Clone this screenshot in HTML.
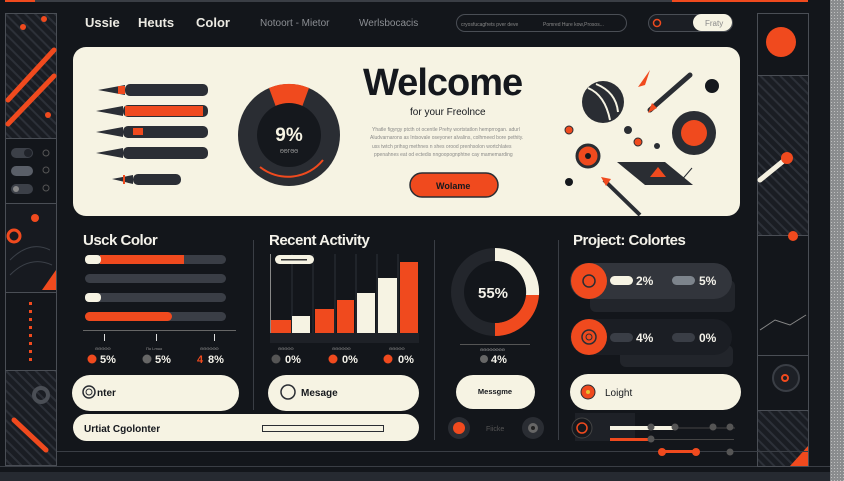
<!DOCTYPE html>
<html><head><meta charset="utf-8"><style>
html,body{margin:0;padding:0;background:#13161b;}
svg{display:block}
text{font-family:"Liberation Sans","DejaVu Sans",sans-serif}
</style></head><body>
<svg width="844" height="481" viewBox="0 0 844 481" xmlns="http://www.w3.org/2000/svg">
<defs>
<pattern id="st" width="7" height="7" patternUnits="userSpaceOnUse" patternTransform="rotate(-45)"><rect width="7" height="7" fill="#1a1d23"/><rect width="2" height="7" fill="#2c3038"/></pattern>
<pattern id="gr" width="3" height="3" patternUnits="userSpaceOnUse"><rect width="3" height="3" fill="#8a8c8e"/><rect width="1" height="1" fill="#bfc0c0"/></pattern>
</defs>
<rect width="844" height="481" fill="#13161b"/>
<rect x="830" y="0" width="14" height="481" fill="url(#gr)"/>
<rect x="0" y="472" width="830" height="9" fill="#262a31"/>
<rect x="5" y="0" width="30" height="2" fill="#f04a1e"/>
<rect x="35" y="0" width="637" height="2" fill="#3a3e45"/>
<rect x="672" y="0" width="136" height="2" fill="#f04a1e"/>
<!-- left column -->
<g stroke="#4a4e55" stroke-width="1" fill="none">
<rect x="5.5" y="13.5" width="51" height="125" fill="url(#st)"/>
<rect x="5.5" y="138.5" width="51" height="65"/>
<rect x="5.5" y="203.5" width="51" height="89" fill="#171a20"/>
<rect x="5.5" y="292.5" width="51" height="78"/>
<rect x="5.5" y="370.5" width="51" height="95" fill="url(#st)"/>
</g>
<g stroke="#f04a1e" stroke-width="5" stroke-linecap="round">
<line x1="8" y1="100" x2="54" y2="50"/><line x1="8" y1="124" x2="54" y2="76"/>
<line x1="14" y1="420" x2="46" y2="450"/>
</g>
<circle cx="23" cy="27" r="3" fill="#f04a1e"/><circle cx="44" cy="19" r="3" fill="#f04a1e"/><circle cx="48" cy="115" r="3" fill="#f04a1e"/>
<rect x="11" y="148" width="22" height="10" rx="5" fill="#3c4048"/><circle cx="28" cy="153" r="4" fill="#20232a"/>
<rect x="11" y="166" width="22" height="10" rx="5" fill="#5a5f68"/>
<rect x="11" y="184" width="22" height="10" rx="5" fill="#3c4048"/><circle cx="16" cy="189" r="3" fill="#888"/>
<circle cx="46" cy="153" r="3" fill="none" stroke="#555"/><circle cx="46" cy="170" r="3" fill="none" stroke="#555"/><circle cx="46" cy="188" r="3" fill="none" stroke="#555"/>
<circle cx="35" cy="218" r="4" fill="#f04a1e"/><circle cx="14" cy="236" r="6" fill="none" stroke="#f04a1e" stroke-width="3"/>
<path d="M42 290 L56 270 L56 290Z" fill="#f04a1e"/>
<path d="M10 260 Q30 240 50 250 M10 275 Q30 255 52 265" stroke="#3b4048" fill="none"/>
<g fill="#f04a1e"><rect x="29" y="302" width="3" height="3"/><rect x="29" y="310" width="3" height="3"/><rect x="29" y="318" width="3" height="3"/><rect x="29" y="326" width="3" height="3"/><rect x="29" y="334" width="3" height="3"/><rect x="29" y="342" width="3" height="3"/><rect x="29" y="350" width="3" height="3"/><rect x="29" y="358" width="3" height="3"/></g>
<circle cx="41" cy="395" r="7" fill="none" stroke="#4a4e55" stroke-width="4"/>
<rect x="0" y="466" width="830" height="1" fill="#3a3e45"/>
<!-- right column -->
<g stroke="#4a4e55" fill="none">
<rect x="757.5" y="13.5" width="51" height="62"/>
<rect x="757.5" y="75.5" width="51" height="160" fill="url(#st)"/>
<rect x="757.5" y="235.5" width="51" height="120"/>
<rect x="757.5" y="355.5" width="51" height="55"/>
<rect x="757.5" y="410.5" width="51" height="56" fill="url(#st)"/>
</g>
<circle cx="781" cy="42" r="15" fill="#f04a1e"/>
<line x1="760" y1="180" x2="787" y2="158" stroke="#f4f0e0" stroke-width="5" stroke-linecap="round"/><circle cx="787" cy="158" r="6" fill="#f04a1e"/>
<circle cx="793" cy="236" r="5" fill="#f04a1e"/>
<circle cx="786" cy="378" r="13" fill="#1d2026" stroke="#3a3e45" stroke-width="2"/><circle cx="785" cy="378" r="3" fill="none" stroke="#f04a1e" stroke-width="2"/>
<path d="M790 466 L808 446 L808 466Z" fill="#f04a1e"/>
<path d="M760 330 L775 320 L790 325 L806 315" stroke="#888" fill="none"/>
<!-- top nav -->
<g fill="#eceae3" font-weight="bold" font-size="13"><text x="85" y="27">Ussie</text><text x="138" y="27">Heuts</text><text x="196" y="27">Color</text></g>
<g fill="#8c8f94" font-size="10"><text x="260" y="26">Notoort - Mietor</text><text x="359" y="26">Werlsbocacis</text></g>
<rect x="456.5" y="14.5" width="170" height="17" rx="8.5" fill="none" stroke="#4a4e55"/>
<text x="461" y="26" font-size="5" fill="#888">cryosfucagfrets pver deve</text><text x="543" y="26" font-size="5" fill="#888">Pomred Hure kow,Prosos...</text>
<rect x="648.5" y="14.5" width="84" height="17" rx="8.5" fill="#1b1e24" stroke="#4a4e55"/>
<circle cx="657" cy="23" r="3.5" fill="none" stroke="#f04a1e" stroke-width="1.5"/>
<rect x="693" y="14" width="39" height="17" rx="8.5" fill="#f6f3e3"/><text x="705" y="26" font-size="8" fill="#888">Fraty</text>
<!-- hero -->
<rect x="73" y="47" width="667" height="169" rx="13" fill="#f6f3e3"/>
<g>
<g fill="#2b2e35">
<rect x="125" y="84" width="83" height="12" rx="5"/><rect x="123" y="105" width="85" height="12" rx="5"/><rect x="123" y="126" width="85" height="12" rx="5"/><rect x="123" y="147" width="85" height="12" rx="5"/><rect x="133" y="174" width="48" height="11" rx="5"/>
<path d="M98 90 L125 85 L125 95Z"/><path d="M96 111 L123 106 L123 116Z"/><path d="M96 132 L123 127 L123 137Z"/><path d="M96 153 L123 148 L123 158Z"/><path d="M112 179 L133 175 L133 184Z"/>
</g>
<rect x="118" y="86" width="7" height="8" fill="#f04a1e"/><rect x="125" y="106" width="78" height="10" fill="#f04a1e"/><rect x="133" y="128" width="10" height="7" fill="#f04a1e"/><rect x="123" y="175" width="2" height="9" fill="#f04a1e"/>
</g>
<circle cx="289" cy="135" r="51" fill="#2a2d33"/>
<path d="M269 88 A51 51 0 0 1 309 88 L302 107 A30 30 0 0 0 276 107Z" fill="#f04a1e"/>
<circle cx="289" cy="135" r="32" fill="#15181d"/>
<path d="M260 167 A45 45 0 0 0 323 160" stroke="#f04a1e" stroke-width="2" fill="none"/>
<text x="289" y="141" text-anchor="middle" font-size="19" font-weight="bold" fill="#f6f3e3">9%</text>
<text x="289" y="153" text-anchor="middle" font-size="5" fill="#aaa">ΘΘΓΘΘ</text>
<text x="363" y="95" font-size="38" font-weight="bold" fill="#15181d" letter-spacing="-1">Welcome</text>
<text x="410" y="115" font-size="10" fill="#15181d">for your Freolnce</text>
<g fill="#8a8a88" font-size="5"><text x="372" y="131">Yhatle figyrgy ptcth ot ocentle Prehy wortstatlon hemprrogan. adurl</text><text x="370" y="139">Aludvarnarons as Intsovale oseyoner alvalins, colhmeed bore pethity.</text><text x="372" y="148">uss twtch prihsg methnes n shes orood prenhsolon wortchlates</text><text x="374" y="156">ppenahnes eat od ectedis nngoopognphtne cay mamemarding</text></g>
<rect x="410" y="173" width="88" height="24" rx="12" fill="#f04a1e" stroke="#2a2d33" stroke-width="1.5"/>
<text x="436" y="189" font-size="9" font-weight="bold" fill="#15181d">Wolame</text>
<!-- illustration -->
<circle cx="603" cy="102" r="21" fill="#2a2d33"/><path d="M588 88 Q605 95 610 120 M596 84 Q616 92 618 112" stroke="#f6f3e3" stroke-width="2" fill="none"/>
<circle cx="694" cy="133" r="22" fill="#2a2d33"/><circle cx="694" cy="133" r="13" fill="#f04a1e"/>
<circle cx="588" cy="156" r="11" fill="#f04a1e" stroke="#2a2d33" stroke-width="3"/><circle cx="588" cy="156" r="3" fill="#15181d"/>
<line x1="650" y1="110" x2="690" y2="75" stroke="#2a2d33" stroke-width="5" stroke-linecap="round"/><path d="M648 113 L652 103 L657 108Z" fill="#f04a1e"/>
<path d="M617 162 L665 162 L693 185 L645 185Z" fill="#2a2d33"/><path d="M650 177 L658 167 L666 177Z" fill="#f04a1e"/>
<line x1="604" y1="180" x2="640" y2="215" stroke="#2a2d33" stroke-width="4"/><path d="M601 177 L611 179 L606 186Z" fill="#f04a1e"/>
<circle cx="712" cy="86" r="7" fill="#15181d"/><circle cx="628" cy="130" r="4" fill="#2a2d33"/><circle cx="638" cy="142" r="4" fill="#f04a1e" stroke="#2a2d33"/><circle cx="569" cy="130" r="4" fill="#f04a1e" stroke="#2a2d33"/><circle cx="569" cy="182" r="4" fill="#15181d"/><circle cx="657" cy="146" r="3" fill="#2a2d33"/>
<path d="M638 87 L650 70 L645 85Z" fill="#f04a1e"/><path d="M680 182 L692 168" stroke="#2a2d33"/>
<!-- lower grid -->
<rect x="57" y="451" width="751" height="1" fill="#3a3e45"/>
<g fill="#3a3e45"><rect x="253" y="240" width="1" height="170"/><rect x="434" y="240" width="1" height="200"/><rect x="558" y="240" width="1" height="200"/></g>
<g fill="#f4f2ea" font-size="15" font-weight="bold" letter-spacing="-0.5"><text x="83" y="245">Usck Color</text><text x="269" y="245">Recent Activity</text><text x="573" y="245">Project: Colortes</text></g>
<!-- bars -->
<g>
<rect x="85" y="255" width="141" height="9" rx="4.5" fill="#3a3e46"/><rect x="100" y="255" width="84" height="9" fill="#f04a1e"/><rect x="85" y="255" width="16" height="9" rx="4" fill="#f6f3e3"/>
<rect x="85" y="274" width="141" height="9" rx="4.5" fill="#3a3e46"/>
<rect x="85" y="293" width="141" height="9" rx="4.5" fill="#3a3e46"/><rect x="85" y="293" width="16" height="9" rx="4" fill="#f6f3e3"/>
<rect x="85" y="312" width="141" height="9" rx="4.5" fill="#3a3e46"/><rect x="85" y="312" width="87" height="9" rx="4.5" fill="#f04a1e"/>
<rect x="83" y="330" width="153" height="1" fill="#666"/>
<g fill="#ddd"><rect x="104" y="334" width="1" height="7"/><rect x="156" y="334" width="1" height="7"/><rect x="214" y="334" width="1" height="7"/></g>
<g fill="#999" font-size="4"><text x="95" y="350">ΘΘΘΘΘ</text><text x="146" y="350">Πo Lmuo</text><text x="200" y="350">ΘΘΘΘΘΘ</text></g>
<g fill="#f4f2ea" font-size="11" font-weight="bold"><text x="100" y="363">5%</text><text x="155" y="363">5%</text><text x="208" y="363">8%</text></g>
<text x="197" y="363" font-size="11" font-weight="bold" fill="#f04a1e">4</text>
<circle cx="92" cy="359" r="4.5" fill="#f04a1e"/><circle cx="147" cy="359" r="4.5" fill="#666"/>
</g>
<!-- chart -->
<g stroke="#2e3238"><line x1="292" y1="254" x2="292" y2="333"/><line x1="313" y1="254" x2="313" y2="333"/><line x1="335" y1="254" x2="335" y2="333"/><line x1="356" y1="254" x2="356" y2="333"/><line x1="377" y1="254" x2="377" y2="333"/><line x1="398" y1="254" x2="398" y2="333"/></g>
<rect x="270" y="254" width="1" height="80" fill="#888"/>
<rect x="275" y="255" width="39" height="9" rx="4.5" fill="#f6f3e3"/><rect x="281" y="259" width="26" height="1.5" fill="#333"/>
<g fill="#f04a1e"><rect x="271" y="320" width="20" height="13"/><rect x="315" y="309" width="19" height="24"/><rect x="337" y="300" width="17" height="33"/><rect x="400" y="262" width="18" height="71"/></g>
<g fill="#f6f3e3"><rect x="292" y="316" width="18" height="17"/><rect x="357" y="293" width="18" height="40"/><rect x="378" y="278" width="19" height="55"/></g>
<rect x="270" y="333" width="149" height="10" fill="#1e2127"/>
<g fill="#999" font-size="4"><text x="278" y="350">ΘΘΘΘΘ</text><text x="332" y="350">ΘΘΘΘΘΘ</text><text x="389" y="350">ΘΘΘΘΘ</text></g>
<g fill="#f4f2ea" font-size="11" font-weight="bold"><text x="285" y="363">0%</text><text x="342" y="363">0%</text><text x="398" y="363">0%</text></g>
<circle cx="276" cy="359" r="4.5" fill="#555"/><circle cx="333" cy="359" r="4.5" fill="#f04a1e"/><circle cx="388" cy="359" r="4.5" fill="#f04a1e"/>
<!-- pills -->
<rect x="72" y="375" width="167" height="36" rx="18" fill="#f6f3e3"/>
<circle cx="89" cy="392" r="6" fill="none" stroke="#2a2d33" stroke-width="1.5"/><circle cx="89" cy="392" r="3" fill="none" stroke="#2a2d33"/>
<text x="97" y="396" font-size="10" font-weight="bold" fill="#15181d">nter</text>
<rect x="268" y="375" width="151" height="36" rx="18" fill="#f6f3e3"/>
<circle cx="288" cy="392" r="7" fill="none" stroke="#2a2d33" stroke-width="1.5"/>
<text x="301" y="396" font-size="10" font-weight="bold" fill="#15181d">Mesage</text>
<rect x="73" y="414" width="346" height="27" rx="13.5" fill="#f6f3e3"/>
<text x="84" y="432" font-size="10" font-weight="bold" fill="#15181d">Urtiat Cgolonter</text>
<rect x="262.5" y="425.5" width="121" height="6" fill="none" stroke="#2a2d33"/>
<!-- donut 55 -->
<circle cx="495" cy="292" r="44" fill="#23262c"/>
<path d="M495 248 A44 44 0 0 1 539 295 L526 295 A31 31 0 0 0 495 261Z" fill="#f6f3e3"/>
<path d="M539 295 A44 44 0 0 1 495 336 L495 323 A31 31 0 0 0 526 295Z" fill="#f04a1e"/>
<circle cx="495" cy="292" r="31" fill="#13161b"/>
<text x="493" y="298" text-anchor="middle" font-size="15" font-weight="bold" fill="#f4f2ea">55%</text>
<rect x="460" y="344" width="70" height="1" fill="#555"/>
<text x="480" y="351" font-size="4" fill="#aaa">ΘΘΘΘΘΘΘΘ</text>
<circle cx="484" cy="359" r="4" fill="#666"/><text x="491" y="363" font-size="11" font-weight="bold" fill="#f4f2ea">4%</text>
<rect x="456" y="375" width="79" height="34" rx="17" fill="#f6f3e3"/>
<text x="495" y="394" text-anchor="middle" font-size="7.5" font-weight="bold" fill="#15181d">Messgme</text>
<circle cx="459" cy="428" r="11" fill="#2a2d33"/><circle cx="459" cy="428" r="6" fill="#f04a1e"/>
<circle cx="533" cy="428" r="11" fill="#2a2d33"/><circle cx="533" cy="428" r="5" fill="#666"/><circle cx="533" cy="428" r="2" fill="#222"/>
<text x="486" y="431" font-size="7" fill="#555">Fiicke</text>
<!-- project -->
<rect x="590" y="280" width="145" height="32" rx="6" fill="#22252b"/>
<rect x="570" y="263" width="162" height="36" rx="18" fill="#32353c"/>
<circle cx="589" cy="281" r="18" fill="#f04a1e"/><circle cx="589" cy="281" r="6" fill="none" stroke="#2a2d33" stroke-width="1.5"/>
<rect x="610" y="276" width="23" height="9" rx="4.5" fill="#f6f3e3"/><text x="636" y="285" font-size="12" font-weight="bold" fill="#f4f2ea">2%</text>
<rect x="672" y="276" width="23" height="9" rx="4.5" fill="#7d848c"/><text x="699" y="285" font-size="12" font-weight="bold" fill="#f4f2ea">5%</text>
<rect x="620" y="345" width="113" height="22" rx="6" fill="#22252b"/>
<rect x="570" y="319" width="162" height="36" rx="18" fill="#1b1e24"/>
<circle cx="589" cy="337" r="18" fill="#f04a1e"/><circle cx="589" cy="337" r="7" fill="none" stroke="#2a2d33" stroke-width="1.5"/><circle cx="589" cy="337" r="3" fill="none" stroke="#2a2d33"/>
<rect x="610" y="333" width="23" height="9" rx="4.5" fill="#3a3e46"/><text x="636" y="342" font-size="12" font-weight="bold" fill="#f4f2ea">4%</text>
<rect x="672" y="333" width="23" height="9" rx="4.5" fill="#3a3e46"/><text x="699" y="342" font-size="12" font-weight="bold" fill="#f4f2ea">0%</text>
<rect x="570" y="374" width="171" height="36" rx="18" fill="#f6f3e3"/>
<circle cx="588" cy="392" r="7" fill="#f04a1e" stroke="#2a2d33"/><circle cx="588" cy="392" r="2" fill="#e8c030"/>
<text x="605" y="396" font-size="10" fill="#15181d">Loight</text>
<rect x="575" y="413" width="60" height="28" fill="#1e2127"/>
<circle cx="582" cy="428" r="10" fill="#15181d" stroke="#444"/><circle cx="582" cy="428" r="5" fill="none" stroke="#f04a1e" stroke-width="1.5"/>
<rect x="610" y="426" width="65" height="4" fill="#f6f3e3"/><rect x="675" y="427.5" width="60" height="1" fill="#444"/>
<circle cx="651" cy="427" r="3.5" fill="#555"/><circle cx="675" cy="427" r="3.5" fill="#555"/><circle cx="713" cy="427" r="3.5" fill="#555"/><circle cx="730" cy="427" r="3.5" fill="#555"/>
<rect x="610" y="438" width="44" height="3" fill="#f04a1e"/><rect x="654" y="439" width="80" height="1" fill="#444"/><circle cx="651" cy="439" r="3.5" fill="#555"/>
<rect x="662" y="450" width="34" height="3" fill="#f04a1e"/><circle cx="662" cy="452" r="4" fill="#f04a1e"/><circle cx="696" cy="452" r="4" fill="#f04a1e"/><circle cx="730" cy="452" r="3.5" fill="#555"/>
</svg>
</body></html>
